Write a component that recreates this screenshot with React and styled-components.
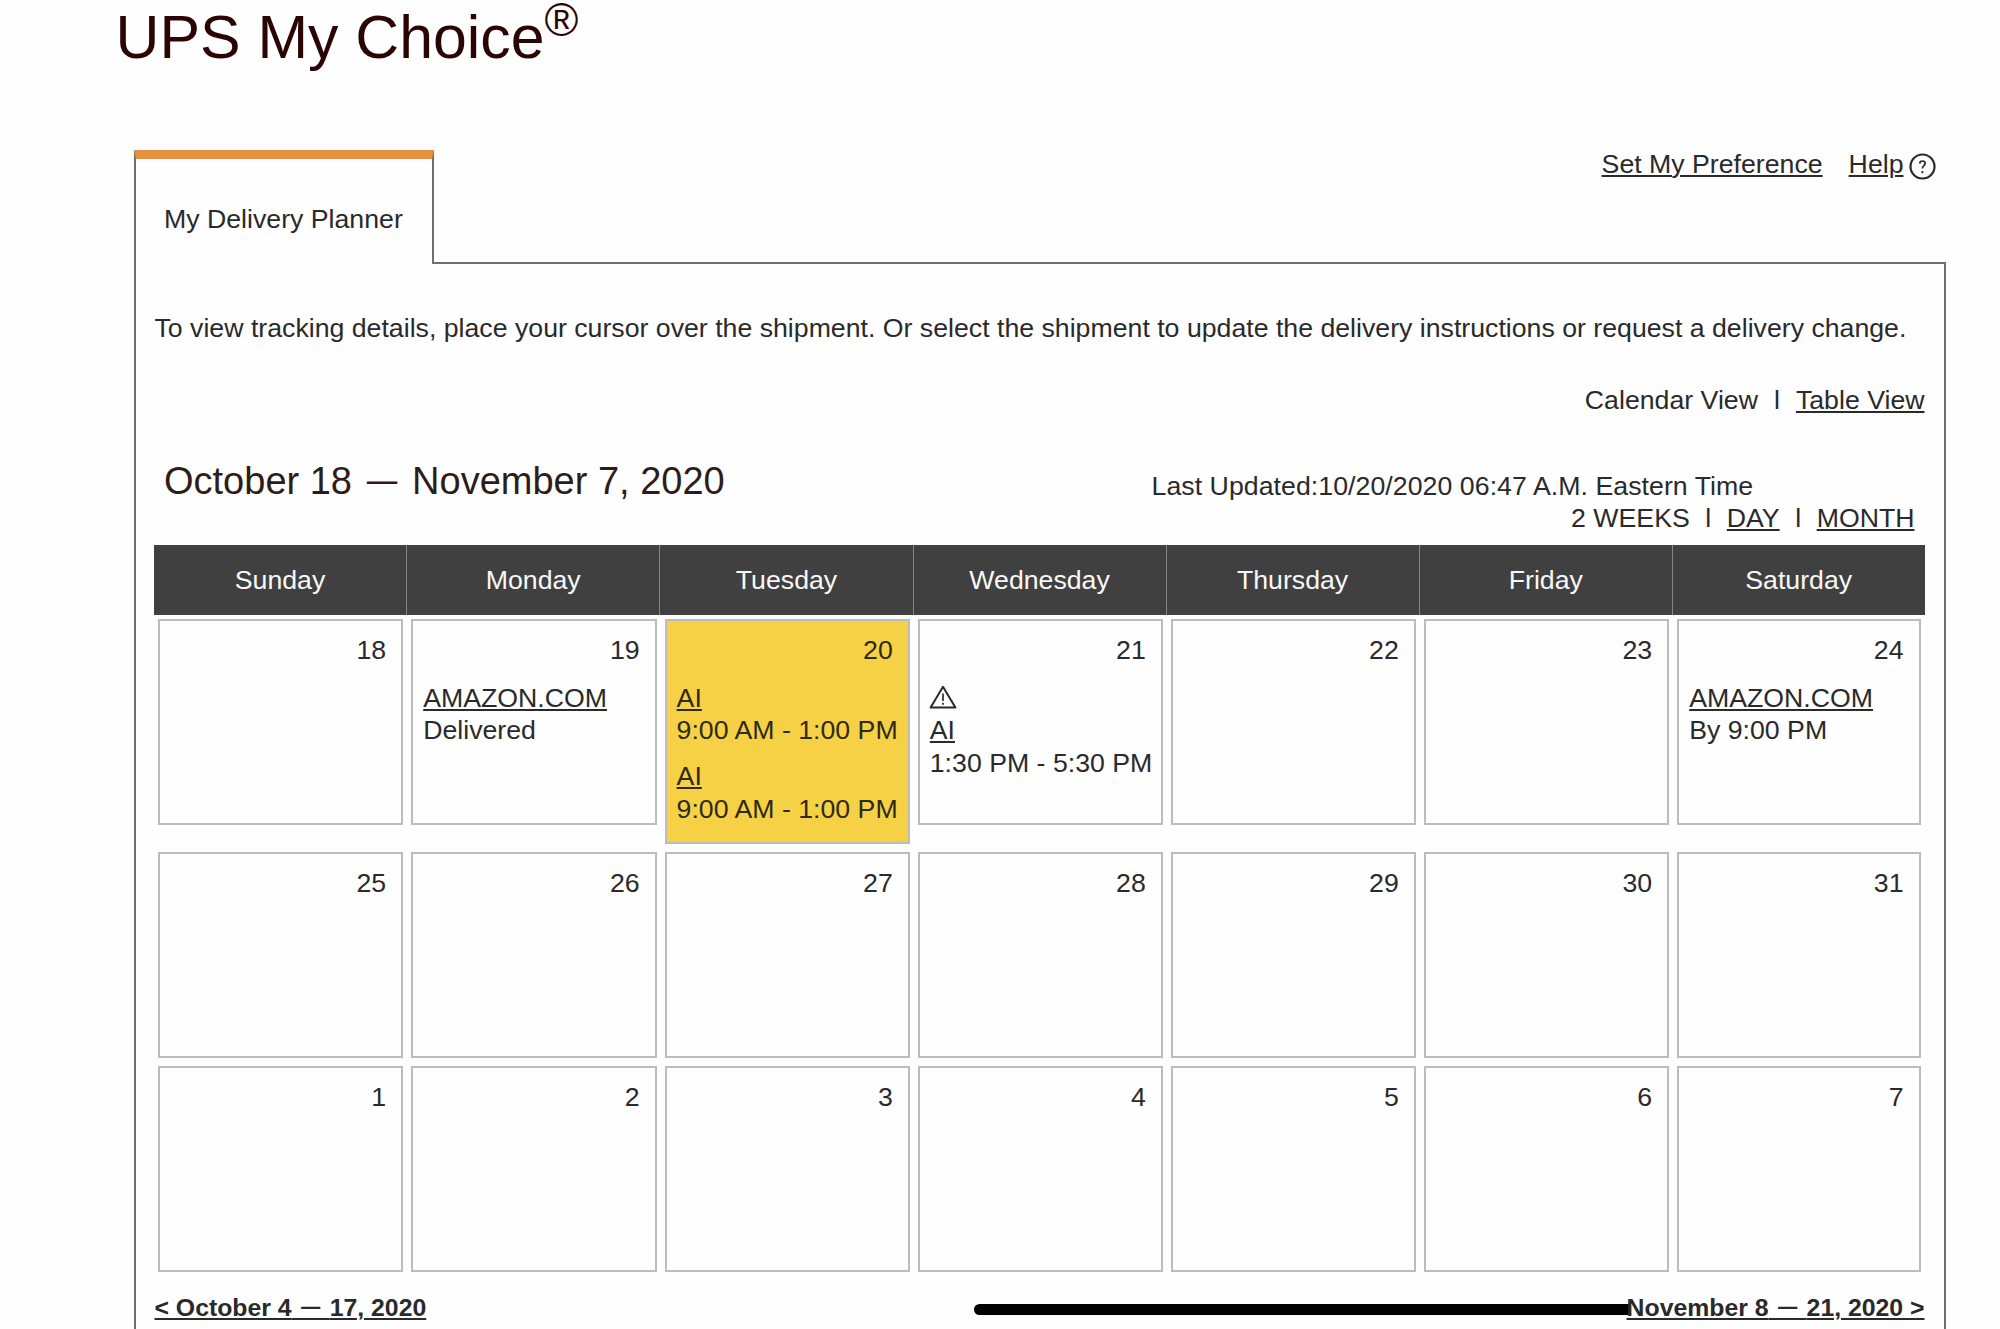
import React from 'react';
import styled, { createGlobalStyle } from 'styled-components';

const GlobalStyle = createGlobalStyle`
  * {
    box-sizing: border-box;
  }
  body {
    margin: 0;
    overflow: hidden;
    background: #fefefe;
    color: #2a2a2a;
    font-family: 'Liberation Sans', Arial, sans-serif;
    font-size: 26.7px;
    line-height: 32.6px;
  }
`;

const Page = styled.div`
  position: relative;
  width: 2000px;
  height: 1329px;
  overflow: hidden;
`;

const Title = styled.h1`
  display: flex;
  margin: 0;
  padding-left: 115.5px;
  height: 150px;
  font-size: 60.8px;
  font-weight: 400;
  line-height: 74px;
  color: #2b0503;
`;

const Registered = styled.sup`
  font-size: 46px;
  line-height: 41px;
`;

const Top = styled.div`
  display: flex;
  justify-content: space-between;
  width: 1812px;
  height: 114px;
  margin-left: 134px;
`;

const Tab = styled.div`
  width: 300px;
  height: 114px;
  padding: 44px 0 0 28px;
  border: 2px solid #6e6f71;
  border-top: 9px solid #e6913f;
  border-bottom: 0;
  white-space: nowrap;
`;

const TopLinks = styled.div`
  display: flex;
  flex: 1;
  justify-content: flex-end;
  gap: 26px;
  padding-right: 10.5px;
  border-bottom: 2px solid #6e6f71;
  line-height: 28px;
`;

const HelpWrap = styled.div`
  display: flex;
  gap: 5px;

  svg {
    margin-top: 2.5px;
  }
`;

const Link = styled.a`
  text-decoration: underline;
  text-decoration-thickness: 2px;
  text-underline-offset: 2px;
`;

const Panel = styled.div`
  width: 1812px;
  height: 1080px;
  margin-left: 134px;
  padding: 48px 19.5px 0 18.5px;
  border: 2px solid #6e6f71;
  border-top: 0;
`;

const Intro = styled.p`
  margin: 0;
  white-space: nowrap;
`;

const ViewRow = styled.div`
  display: flex;
  justify-content: flex-end;
  margin-top: 39px;
`;

const Bar = styled.span`
  width: ${props => props.$width || '38px'};
  text-align: center;
`;

const RangeRow = styled.div`
  display: flex;
  justify-content: space-between;
  height: 128.5px;
`;

const Range = styled.h2`
  margin: 0;
  padding: 42px 0 0 9.5px;
  font-size: 38px;
  font-weight: 400;
  line-height: 46px;
  color: #2e1c18;
`;

const Dash = styled.span`
  margin: 0 0.09em;
  font-family: 'Noto Sans', sans-serif;
  font-size: 0.87em;
  line-height: 1;
  vertical-align: 0.06em;
`;

const Updated = styled.div`
  width: 773px;
  padding-top: 53.5px;
  letter-spacing: 0.05px;
`;

const Scale = styled.div`
  display: flex;
  justify-content: flex-end;
  padding-right: 10px;
  letter-spacing: 0;
`;

const columns = '253px 253.4px 253.2px 253px 253px 253.4px 1fr';

const Head = styled.div`
  display: grid;
  grid-template-columns: ${columns};
  height: 70px;
  margin-left: -0.5px;
  background: #404040;
  color: #f8f8f8;
`;

const HeadCell = styled.div`
  padding-top: 19px;
  text-align: center;
  border-right: ${props => (props.$last ? 0 : '1px solid #858585')};
`;

const Week = styled.div`
  display: grid;
  grid-template-columns: ${columns};
  align-items: start;
  margin-left: -0.3px;
`;

const Day = styled.div`
  margin: 4px;
  min-height: 206px;
  padding: 13.5px 0 16.5px 10px;
  border: 2px solid #bcbcbc;
  background: ${props => (props.$today ? '#f6d146' : 'transparent')};
  color: ${props => (props.$today ? '#2f2a12' : 'inherit')};
`;

const DayNumber = styled.div`
  margin-right: 15px;
  text-align: right;
`;

const Shipment = styled.div`
  display: flex;
  flex-direction: column;
  align-items: flex-start;
  margin-top: ${props => (props.$first ? '15px' : '13px')};
  white-space: nowrap;
`;

const IconLine = styled.span`
  height: 32.6px;
  margin-left: -1px;
  padding-top: 3px;
  line-height: 0;
`;

const Pager = styled.div`
  display: flex;
  justify-content: space-between;
  margin-top: 16px;
  font-size: 24.8px;
  font-weight: 700;
`;

const PagerLink = styled(Link)`
  position: relative;
  z-index: 2;
`;

// 밑줄이 끊기지 않도록 여백 대신 공백 너비를 조절합니다
const PagerDash = styled.span`
  font-family: 'Noto Sans', sans-serif;
  font-size: 0.84em;
  font-weight: 600;
  line-height: 1;
  vertical-align: 2px;
  word-spacing: 3.2px;
`;

const HomeIndicator = styled.div`
  position: absolute;
  left: 974px;
  top: 1304px;
  width: 657px;
  height: 11px;
  border-radius: 6px 0 0 6px;
  background: #000;
`;

const HelpIcon = () => (
  <svg width="27" height="27" viewBox="0 0 27 27" fill="none" stroke="#2a2a2a">
    <circle cx="13.5" cy="13.5" r="12" strokeWidth="2.2" />
    <path
      d="M10.7 10.6c.1-1.7 1.2-2.6 2.7-2.6 1.6 0 2.7.9 2.7 2.4 0 2.2-2.7 2.2-2.7 5"
      strokeWidth="1.7"
    />
    <path d="M13.4 18v2.2" strokeWidth="1.8" />
  </svg>
);

const WarningIcon = () => (
  <svg width="28" height="24" viewBox="0 0 28 24" fill="none" stroke="#2a2a2a">
    <path
      d="M14 1.8 26.4 22.4H1.6Z"
      strokeWidth="2"
      strokeLinejoin="round"
    />
    <path d="M14 8.5v7.6M14 17.7v2" strokeWidth="1.7" />
  </svg>
);

const days = [
  'Sunday',
  'Monday',
  'Tuesday',
  'Wednesday',
  'Thursday',
  'Friday',
  'Saturday',
];

const weeks = [
  [18, 19, 20, 21, 22, 23, 24],
  [25, 26, 27, 28, 29, 30, 31],
  [1, 2, 3, 4, 5, 6, 7],
];

const shipments = {
  19: [{ name: 'AMAZON.COM', time: 'Delivered' }],
  20: [
    { name: 'AI', time: '9:00 AM - 1:00 PM' },
    { name: 'AI', time: '9:00 AM - 1:00 PM' },
  ],
  21: [{ name: 'AI', time: '1:30 PM - 5:30 PM', warning: true }],
  24: [{ name: 'AMAZON.COM', time: 'By 9:00 PM' }],
};

function App() {
  return (
    <Page>
      <GlobalStyle />
      <Title>
        UPS My Choice<Registered>®</Registered>
      </Title>
      <Top>
        <Tab>My Delivery Planner</Tab>
        <TopLinks>
          <Link>Set My Preference</Link>
          <HelpWrap>
            <Link>Help</Link>
            <HelpIcon />
          </HelpWrap>
        </TopLinks>
      </Top>
      <Panel>
        <Intro>
          To view tracking details, place your cursor over the shipment. Or
          select the shipment to update the delivery instructions or request a
          delivery change.
        </Intro>
        <ViewRow>
          <span>Calendar View</span>
          <Bar>l</Bar>
          <Link>Table View</Link>
        </ViewRow>
        <RangeRow>
          <Range>
            October 18 <Dash>—</Dash> November 7, 2020
          </Range>
          <Updated>
            <div>Last Updated:10/20/2020 06:47 A.M. Eastern Time</div>
            <Scale>
              <span>2 WEEKS</span>
              <Bar $width="37px">l</Bar>
              <Link>DAY</Link>
              <Bar $width="37px">l</Bar>
              <Link>MONTH</Link>
            </Scale>
          </Updated>
        </RangeRow>
        <Head>
          {days.map(day => (
            <HeadCell key={day} $last={day === 'Saturday'}>
              {day}
            </HeadCell>
          ))}
        </Head>
        {weeks.map(week => (
          <Week key={week[0]}>
            {week.map(date => (
              <Day key={date} $today={date === 20}>
                <DayNumber>{date}</DayNumber>
                {(shipments[date] || []).map((item, index) => (
                  <Shipment key={index} $first={index === 0}>
                    {item.warning && (
                      <IconLine>
                        <WarningIcon />
                      </IconLine>
                    )}
                    <Link>{item.name}</Link>
                    <span>{item.time}</span>
                  </Shipment>
                ))}
              </Day>
            ))}
          </Week>
        ))}
        <Pager>
          <PagerLink>
            &lt; October 4<PagerDash> — </PagerDash>17, 2020
          </PagerLink>
          <PagerLink>
            November 8<PagerDash> — </PagerDash>21, 2020 &gt;
          </PagerLink>
        </Pager>
      </Panel>
      <HomeIndicator />
    </Page>
  );
}

export default App;
